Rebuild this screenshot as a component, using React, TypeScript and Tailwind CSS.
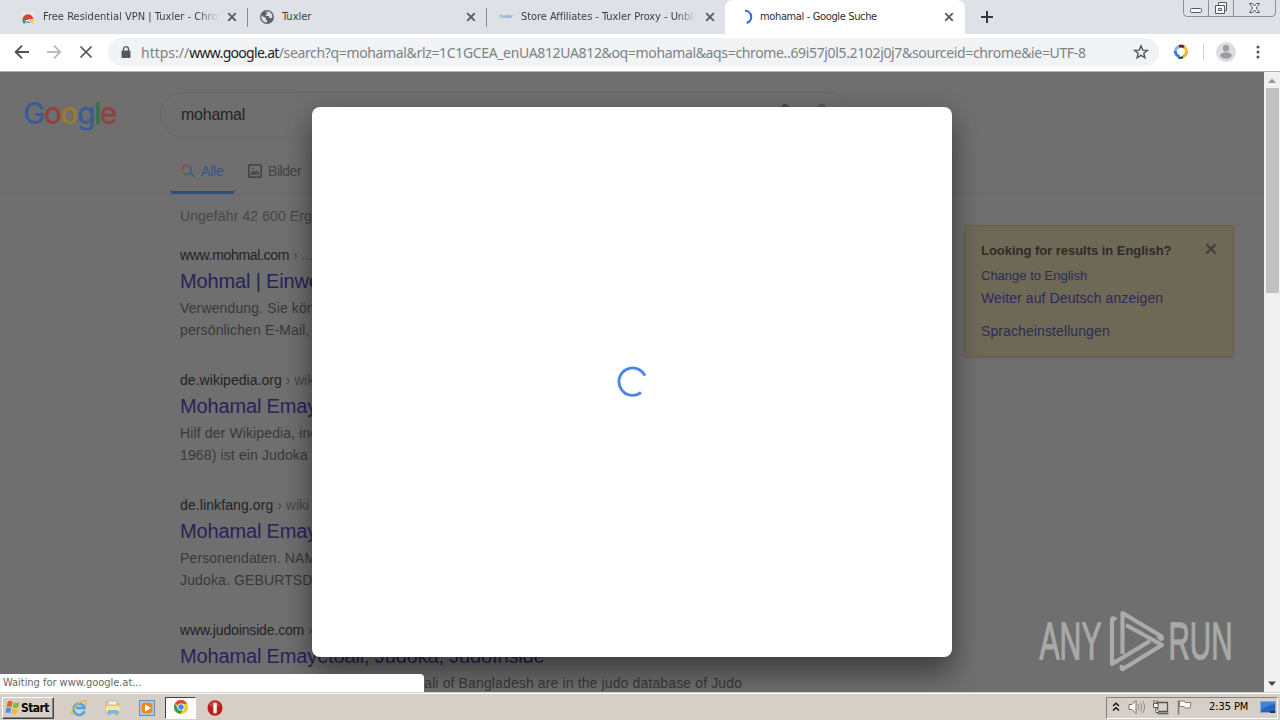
import React from "react";

const uiFont = "font-['DejaVu_Sans_Condensed','DejaVu_Sans',sans-serif] [font-stretch:condensed]";

function CloseX({ className = "" }: { className?: string }) {
  return (
    <svg width="10" height="10" viewBox="0 0 10 10" className={`shrink-0 ${className}`}>
      <path d="M1.2 1.2 8.8 8.8M8.8 1.2 1.2 8.8" stroke="#5a5d61" strokeWidth="1.9" />
    </svg>
  );
}

function StoreIcon() {
  return (
    <svg width="16" height="16" viewBox="0 0 16 16" className="shrink-0">
      <path d="M2 2h12v12.500H2z" fill="#e9eaec" />
      <path d="M5 4V2.500h6V4" stroke="#dcdcde" fill="none" />
      <path d="M2.500 11a5.500 5.500 0 0 1 11-.5L8 11z" fill="#db4437" />
      <path d="M2.500 11.500a5.500 5.500 0 0 1 .8-3l3 4L6 14.500H3z" fill="#2ba065" />
      <path d="M8 10h5.500v4.500H9z" fill="#ffcd40" />
      <path d="M5.500 14.500a2.600 2.600 0 0 1 5.200 0z" fill="#4285f4" stroke="#fff" strokeWidth=".7" />
    </svg>
  );
}

function GlobeIcon() {
  return (
    <svg width="16" height="16" viewBox="0 0 16 16" className="shrink-0">
      <circle cx="8" cy="8" r="7" fill="#5f6368" />
      <path d="M2.600 6.200 5 8.300l2 .4v2l1.200 1v1.700C5 13.800 2.300 11.200 2.300 8z" fill="#dee1e6" />
      <path d="M6.500 2.700 10.300 2.600 13 5.300 13.500 8 12 9.500 10.300 8.600 9.500 7 6.800 6.900 7 5.200 8.700 4.500z" fill="#dee1e6" />
    </svg>
  );
}

function Tab({ icon, title, className }: { icon: React.ReactNode; title: React.ReactNode; className: string }) {
  return (
    <div className={`flex h-[34px] items-center ${className}`}>
      {icon}
      {title}
      <CloseX className="ml-auto" />
    </div>
  );
}

function TabStrip() {
  return (
    <div className={`relative flex h-[34px] shrink-0 bg-[#dee1e6] text-[11px] text-[#3c4043] ${uiFont}`}>
      <Tab
        className="ml-2 w-[239px] pr-[10px] pl-3"
        icon={<StoreIcon />}
        title={<span className="ml-[7px] w-[176px] overflow-hidden pt-px tracking-[0.02px] whitespace-nowrap [mask-image:linear-gradient(90deg,#000_155px,transparent_176px)]">Free Residential VPN | Tuxler - Chrome</span>}
      />
      <div className="mt-2 h-[19px] w-px bg-[#85888c]" />
      <Tab className="w-[238px] pr-[10px] pl-[11px]" icon={<GlobeIcon />} title={<span className="ml-[7px] pt-px">Tuxler</span>} />
      <div className="mt-2 h-[19px] w-px bg-[#85888c]" />
      <Tab
        className="w-[238px] pr-[10px] pl-[11px]"
        icon={<span className="w-4 text-center text-[5px] font-bold tracking-[-0.4px] text-[#8cadd6]">tuxler</span>}
        title={<span className="ml-[7px] w-[176px] overflow-hidden pt-px tracking-[-0.05px] whitespace-nowrap [mask-image:linear-gradient(90deg,#000_155px,transparent_176px)]">Store Affiliates - Tuxler Proxy - Unblock</span>}
      />
      <Tab
        className="w-[240px] rounded-t-lg bg-white pr-[11px] pl-3 text-[#2b2d30]"
        icon={
          <svg width="16" height="16" viewBox="0 0 16 16" className="shrink-0">
            <path d="M8 1.800a6.200 6.200 0 0 1 1.600 12.200" fill="none" stroke="#2f6bdc" strokeWidth="2.100" />
          </svg>
        }
        title={<span className="ml-[7px] pt-px tracking-[-0.36px] whitespace-nowrap">mohamal - Google Suche</span>}
      />
      <svg width="12" height="12" viewBox="0 0 12 12" className="mt-[11px] ml-4">
        <path d="M6 0v12M0 6h12" stroke="#33363a" strokeWidth="2" />
      </svg>
      <svg width="93" height="17" viewBox="0 0 93 17" className="mr-[4px] ml-auto">
        <path d="M.5 0v13q0 3.500 3.500 3.500h85q3.500 0 3.500-3.500V0M25.500 0v16M50.500 0v16" fill="none" stroke="#8d9096" />
        <rect x="7.500" y="8.500" width="11" height="4" rx="1" fill="#f5f6f8" stroke="#55585e" />
        <path d="M35.500 2.500h8v8h-2v3h-9v-8h3z" fill="#f5f6f8" stroke="#55585e" />
        <path d="M35.500 5.500h6v5M35.500 8.500h3v2h-3z" fill="none" stroke="#55585e" />
        <path d="M66.500 3.500h3l2 2.500 2-2.500h3l-3.200 4.500 3.200 4.500h-3l-2-2.500-2 2.500h-3L69.700 8z" fill="#f5f6f8" stroke="#55585e" />
      </svg>
    </div>
  );
}

function Toolbar() {
  return (
    <div className="flex h-[38px] shrink-0 items-center border-b border-[#b3b3b3] bg-white pb-px">
      <svg width="96" height="16" viewBox="0 0 96 16" className="shrink-0" fill="none" strokeWidth="1.900">
        <path d="M29 8H16M22 1.700 15.700 8 22 14.300" stroke="#4e5155" />
        <path d="M47 8h13M54 1.700 60.300 8 54 14.300" stroke="#b9bbbd" />
        <path d="m80.500 2.500 11 11M91.500 2.500l-11 11" stroke="#4e5155" strokeWidth="1.700" />
      </svg>
      <div className="ml-3 flex h-7 w-[1051px] items-center rounded-full bg-[#f1f3f4] pl-[13px]">
        <svg width="10" height="12" viewBox="0 0 10 12" className="shrink-0">
          <rect x=".5" y="4.500" width="9" height="7.500" rx="1" fill="#55585c" />
          <path d="M2.500 5V3.200a2.500 2.500 0 0 1 5 0V5" fill="none" stroke="#55585c" strokeWidth="1.300" />
        </svg>
        <span className="ml-[10px] font-['Noto_Sans',sans-serif] text-[14px] whitespace-nowrap text-[#7d8186]">
          https://<span className="tracking-[-0.7px] text-[#1c1d20]">www.google.at</span>
          <span className="tracking-[-0.35px]">/search?q=mohamal&amp;rlz=1C1GCEA_enUA812UA812&amp;oq=mohamal&amp;aqs=chrome..69i57j0l5.2102j0j7&amp;sourceid=chrome&amp;ie=UTF-8</span>
        </span>
        <svg width="16" height="16" viewBox="0 0 16 16" className="mr-[10px] ml-auto shrink-0">
          <path d="m8 1.800 1.700 4.300 4.600.3-3.500 2.900 1.100 4.500L8 11.300l-3.900 2.500 1.100-4.500-3.500-2.900 4.600-.3z" fill="none" stroke="#515458" strokeWidth="1.400" />
        </svg>
      </div>
      <svg width="16" height="16" viewBox="0 0 16 16" className="ml-[14px] shrink-0" fill="none" strokeWidth="3">
        <path d="M7 2.500A6 6 0 0 0 2.200 7" stroke="#7cb8ff" />
        <path d="M2.200 7q.3 4 4.300 5.800" stroke="#3478ee" />
        <path d="M6 2.300q3-1 5.500 1" stroke="#771d28" />
        <path d="M11 3q3 2 2.500 5.500" stroke="#f7c52b" />
        <path d="M13.500 7.500q0 4-4 5" stroke="#f0b429" />
        <path d="M10 13q-2 1.400-4.500.5" stroke="#294a38" strokeWidth="2.300" />
      </svg>
      <div className="ml-[14px] h-4 w-px bg-[#cfd1d4]" />
      <svg width="20" height="20" viewBox="0 0 20 20" className="ml-3 shrink-0">
        <circle cx="10" cy="10" r="10" fill="#dddddf" />
        <circle cx="10" cy="6.200" r="3.200" fill="#9b9da0" />
        <ellipse cx="10" cy="13.500" rx="5.700" ry="3.200" fill="#9b9da0" />
      </svg>
      <svg width="4" height="14" viewBox="0 0 4 14" className="ml-[20px]" fill="#4f5256">
        <circle cx="2" cy="2" r="1.500" /><circle cx="2" cy="7" r="1.500" /><circle cx="2" cy="12" r="1.500" />
      </svg>
    </div>
  );
}

function GoogleLogo() {
  return (
    <div className="mt-[-5px] ml-[23px] w-[94px] font-['Inter',sans-serif] text-[30px] leading-[40px] font-medium tracking-[-1.6px] whitespace-nowrap">
      <span className="text-[#3c5c93]">G</span>
      <span className="text-[#91423d]">o</span>
      <span className="text-[#987c33]">o</span>
      <span className="text-[#3c5c93]">g</span>
      <span className="text-[#34704a]">l</span>
      <span className="text-[#91423d]">e</span>
    </div>
  );
}

type Result = { site: string; path: string; title: string; lines: string[]; siteClass: string };

const results: Result[] = [
  { site: "www.mohmal.com", siteClass: "tracking-[-0.32px]", path: " › ...", title: "Mohmal | Einweg", lines: ["Verwendung. Sie können", "persönlichen E-Mail, die"] },
  { site: "de.wikipedia.org", siteClass: "tracking-[0.04px]", path: " › wiki", title: "Mohamal Emayetoali", lines: ["Hilf der Wikipedia, indem", "1968) ist ein Judoka aus"] },
  { site: "de.linkfang.org", siteClass: "tracking-[0.1px]", path: " › wiki", title: "Mohamal Emayetoali", lines: ["Personendaten. NAME", "Judoka. GEBURTSDATUM"] },
  { site: "www.judoinside.com", siteClass: "tracking-[-0.15px]", path: " › judoka", title: "Mohamal Emayetoali, Judoka, JudoInside", lines: ["The Judo results of Mohamal Emayetoali of Bangladesh are in the judo database of Judo"] },
];

function ResultItem({ site, siteClass, path, title, lines }: Result) {
  return (
    <article className="h-[125px] whitespace-nowrap text-[#393939]">
      <div className="text-[14px] leading-[18px] text-[#222324]">
        <span className={siteClass}>{site}</span>
        <span className="text-[#454748]">{path}</span>
      </div>
      <h3 className="mt-1 text-[20px] leading-[26px] tracking-[-0.15px] text-[#2a2259]">{title}</h3>
      <div className="mt-[3px] text-[14px] leading-[22px] tracking-[0.13px]">
        {lines.map((l) => <p key={l}>{l}</p>)}
      </div>
    </article>
  );
}

function SearchPage() {
  return (
    <main className="h-full overflow-hidden bg-[#6f6f6f] font-['Liberation_Sans',sans-serif]">
      <header className="h-[123px] border-b border-[#696969] pt-[20px]">
        <div className="flex h-[46px] items-center">
          <GoogleLogo />
          <div className="ml-[43px] flex h-[46px] w-[690px] items-center rounded-full border border-[#676767] pl-5 text-[16px] tracking-[-0.25px] text-[#242424]">
            mohamal
            <span className="mt-[-14px] ml-[536px] h-2 w-2 self-center rounded-full bg-[#484b50]" />
            <span className="mt-[-14px] ml-[29px] h-2 w-2 self-center rounded-full bg-[#54565a]" />
          </div>
        </div>
        <nav className="mt-[13px] flex h-[43px] pl-[170px] text-[14px] leading-[42px] tracking-[-0.2px] text-[#424345]">
          <div className="flex w-[65px] items-center rounded-b-sm border-b-3 border-[#2d4b80] pl-[10px] text-[#31558c]">
            <svg width="16" height="16" viewBox="0 0 16 16" fill="none" strokeWidth="1.700">
              <path d="M2 8a4.500 4.500 0 0 1 7.500-4.200" stroke="#86503e" />
              <path d="M9.200 3.600a4.500 4.500 0 0 1 .8 6L14.500 14" stroke="#3d5d90" />
              <path d="M2 7a4.500 4.500 0 0 0 2 3.500" stroke="#8b702d" />
              <path d="M3.700 10.300a4.500 4.500 0 0 0 6-.4" stroke="#486b52" />
            </svg>
            <span className="ml-[5px]">Alle</span>
          </div>
          <div className="flex items-center border-b-3 border-transparent pl-3 tracking-[-0.45px]">
            <svg width="16" height="16" viewBox="0 0 16 16" fill="none" stroke="#404143" strokeWidth="1.500">
              <rect x="1.750" y="1.750" width="12.500" height="12.500" rx="1.800" />
              <path d="m4 11 2-2.500 1.500 1.500L9.500 8l2.500 3zM5 5.500h1.500" strokeWidth="1.200" />
            </svg>
            <span className="ml-[5px]">Bilder</span>
          </div>
        </nav>
      </header>
      <div className="flex pl-[180px]">
        <section className="w-[784px] shrink-0">
          <p className="mt-3 mb-[21px] text-[14px] leading-[18px] tracking-[0.1px] text-[#464748]">Ungefähr 42 600 Ergebnisse</p>
          {results.map((r, i) => <ResultItem key={i} {...r} />)}
        </section>
        <aside className="mt-[30px] flex h-[132px] w-[270px] justify-between rounded-xs border border-[#6c6148] bg-[#6e6857] px-4 pt-[15px] text-[14px] text-[#2d2a5a] shadow-[0_1px_2px_rgba(0,0,0,0.15)]">
          <div className="whitespace-nowrap">
            <p className="text-[13px] leading-[20px] font-bold tracking-[-0.03px] text-[#2d2c26]">Looking for results in English?</p>
            <p className="mt-[5px] text-[13px] leading-[20px]">Change to English</p>
            <p className="mt-[2px] leading-[20px] tracking-[0.1px]">Weiter auf Deutsch anzeigen</p>
            <p className="mt-[13px] leading-[20px] tracking-[0.1px]">Spracheinstellungen</p>
          </div>
          <svg width="12" height="12" viewBox="0 0 12 12" className="mt-[2px]">
            <path d="m1.500 1.500 9 9M10.500 1.500l-9 9" stroke="#403f39" strokeWidth="2.300" />
          </svg>
        </aside>
      </div>
    </main>
  );
}

function Scrollbar() {
  return (
    <div className="flex w-4 shrink-0 flex-col items-center bg-[#f1f1f1]">
      <svg width="16" height="16" viewBox="0 0 16 16"><path d="M4 11h8L8 6.500z" fill="#969696" /></svg>
      <div className="h-[205px] w-[13px] bg-[#c1c1c1]" />
      <svg width="16" height="16" viewBox="0 0 16 16" className="mt-auto"><path d="M4 5.500h8L8 10z" fill="#484848" /></svg>
    </div>
  );
}

function Watermark() {
  return (
    <svg width="220" height="74" viewBox="1030 603 220 74" className="absolute top-[531px] left-[1030px]" fill="#a9a9a9">
      <g fontFamily="'Liberation Sans Narrow','Liberation Sans',sans-serif" fontSize="52" stroke="#a9a9a9" strokeWidth="1.300">
        <text x="1039.500" y="659" textLength="62" lengthAdjust="spacingAndGlyphs">ANY</text>
        <text x="1168.500" y="659" textLength="64" lengthAdjust="spacingAndGlyphs">RUN</text>
      </g>
      <g fill="none" stroke="#ababab" strokeWidth="4.200" strokeLinejoin="round">
        <path d="M1116 620q-4-4-4 1v43l38-23" />
        <path d="M1122.500 654v-41l38.500 23q3 6-3 0" />
        <path d="M1126 625l36 20-39 24q-2 1-1-4" />
      </g>
    </svg>
  );
}

function Taskbar() {
  return (
    <footer className={`flex h-7 shrink-0 items-center border-t border-[#d4d0c8] bg-[#d6cfc7] text-[11px] text-black shadow-[inset_0_1px_0_#fff] ${uiFont}`}>
      <div className="mt-[2px] ml-[2px] flex h-[22px] w-[52px] items-center border border-t-white border-r-[#444] border-b-[#444] border-l-white pl-px shadow-[inset_-1px_-1px_0_#87837b]">
        <svg width="17" height="17" viewBox="0 0 16 16" className="shrink-0">
          <path d="M3.500 2.500q2-1.500 4.500 0L7 7.500q-2-1-4.500 0z" fill="#e2602a" />
          <path d="M9 3q2 1.300 5.500 0l-1.200 5q-2.500 1-5.200-.3z" fill="#86b83c" />
          <path d="M2.300 8.500q2.500-1 4.500 0l-1 4.800q-2-1.300-4.600-.1z" fill="#4a8fd9" />
          <path d="M7.800 9q2.500 1 5.200.1L12 13.800q-3 1-5.300-.2z" fill="#f1b92e" />
        </svg>
        <b className="text-[12px] tracking-[-0.6px]">Start</b>
      </div>
      <div className="mt-[2px] ml-[16px] flex items-center">
        <svg width="18" height="18" viewBox="0 0 18 18">
          <path d="M14.500 12A5.600 5.600 0 1 1 14.600 9H6" fill="none" stroke="#4aa6e2" strokeWidth="2.600" />
          <path d="M2.500 16Q0 13 6.500 6.500T16 2.500q1 1.500-1 4" fill="none" stroke="#e6b535" strokeWidth="1.200" />
        </svg>
        <svg width="18" height="18" viewBox="0 0 18 18" className="ml-4">
          <path d="M2 3h6l1 2h6v9H2z" fill="#f3db80" stroke="#cda74a" strokeWidth=".7" />
          <path d="M4 1.800h9V6H4z" fill="#e8f0e2" stroke="#8cb486" strokeWidth=".6" />
          <path d="M2 7.500h14V12H2z" fill="#f8e79f" />
          <path d="M4 16v-5h10v5h-3v-2H7v2z" fill="#7db9dd" />
        </svg>
        <svg width="16" height="16" viewBox="0 0 16 16" className="ml-[17px]">
          <rect x=".5" y=".5" width="15" height="15" fill="#a7cbed" stroke="#638dbb" />
          <rect x="2.500" y="2.500" width="11" height="11" rx="4" fill="#f08a1b" />
          <path d="M6 4.300 11.700 8 6 11.700z" fill="#fff" />
        </svg>
      </div>
      <div className="mt-[2px] ml-[10px] flex h-[22px] w-[31px] items-center justify-center border border-t-[#45423d] border-r-white border-b-white border-l-[#45423d] bg-[#fcfbfa]">
        <svg width="16" height="16" viewBox="0 0 16 16" className="mt-[-2px]">
          <circle cx="8" cy="8" r="7" fill="#f6c829" />
          <path d="M8 8 1.900 4.500A7 7 0 0 1 14.100 4.800H8z" fill="#db4637" />
          <path d="M1.900 4.600A7 7 0 0 0 7.400 15l3-5.500L8 8 4.900 9.800z" fill="#359b55" />
          <circle cx="8" cy="8" r="3.500" fill="#fff" />
          <circle cx="8" cy="8" r="2.700" fill="#4285f4" />
        </svg>
      </div>
      <svg width="16" height="16" viewBox="0 0 16 16" className="mt-[2px] ml-[11px]">
        <ellipse cx="8" cy="8" rx="7.500" ry="7.700" fill="#bd1d1d" />
        <ellipse cx="7.500" cy="4.500" rx="5" ry="3" fill="#d95c57" opacity=".55" />
        <rect x="6.300" y="2.500" width="3.500" height="11" rx="1.500" fill="#f3efea" />
      </svg>
      <div className="mt-[2px] mr-[2px] ml-auto flex h-[22px] w-[172px] items-center border border-t-[#85817a] border-r-white border-b-white border-l-[#85817a] pb-[2px]">
        <svg width="8" height="10" viewBox="0 0 8 10" className="ml-[5px]">
          <path d="M1 4 4 1.300 7 4M1 8.500 4 5.800l3 2.700" fill="none" stroke="#111" strokeWidth="1.500" />
        </svg>
        <svg width="18" height="16" viewBox="0 0 18 16" className="ml-2">
          <path d="M1 5.500h3l4-4v13l-4-4H1z" fill="#fafafa" stroke="#77736c" />
          <path d="M10 5q2 3 0 6M12.300 3.500q3 4.500 0 9M14.600 2q4 6 0 12" fill="none" stroke="#918d86" />
        </svg>
        <svg width="18" height="16" viewBox="0 0 18 16" className="ml-[6px]">
          <path d="M5.500 3.500h10v9h-10z" fill="#d6d3cc" stroke="#595650" strokeWidth="1.300" />
          <path d="M5.500 14.500h11" stroke="#696660" strokeWidth="1.700" />
          <path d="M2 1v3M5 1v3M1.500 4.500h4.500v4h-4.500zM3.800 8.500v5h3" fill="#fff" stroke="#5e5b55" />
        </svg>
        <svg width="18" height="16" viewBox="0 0 18 16" className="ml-[6px]">
          <path d="M2.500 1.500v14" stroke="#79756e" strokeWidth="1.500" />
          <path d="M3.500 2h5l1 1.500h5.500L14 9H9L8 7.500H3.500z" fill="#fff" stroke="#827e77" />
        </svg>
        <span className="ml-[15px] pt-[2px] text-[11px] tracking-[-0.08px] whitespace-nowrap">2:35 PM</span>
        <svg width="16" height="16" viewBox="0 0 16 16" className="mr-px ml-auto shrink-0">
          <rect x=".5" y="2.500" width="15" height="11" fill="#2863b8" stroke="#8ba8ca" />
          <path d="M1 3h14v2q-7 1-14 6z" fill="#3f83d8" />
          <path d="M10 12h5v2h-5z" fill="#16345f" />
        </svg>
      </div>
    </footer>
  );
}

export default function App() {
  return (
    <div className="flex h-[720px] w-[1280px] flex-col overflow-hidden bg-white">
      <TabStrip />
      <Toolbar />
      <div className="relative flex h-[620px] shrink-0">
        <div className="relative w-[1264px] overflow-hidden">
          <SearchPage />
          <div className="absolute inset-0 flex items-center justify-center">
            <div className="flex h-[550px] w-[640px] items-center justify-center rounded-lg bg-white shadow-[0_5px_26px_rgba(0,0,0,0.22),0_20px_28px_rgba(0,0,0,0.3)]">
              <svg width="32" height="32" viewBox="0 0 32 32">
                <path d="M29 9.700A13.700 13.700 0 1 0 25 26.500" fill="none" stroke="#4a86e4" strokeWidth="2.900" />
              </svg>
            </div>
          </div>
        </div>
        <Scrollbar />
        <Watermark />
        <div className={`absolute bottom-0 left-0 flex h-[18px] w-[424px] items-center rounded-tr bg-white pt-px pl-[3px] text-[11px] tracking-[-0.03px] text-[#65686c] ${uiFont}`}>
          Waiting for www.google.at...
        </div>
      </div>
      <Taskbar />
    </div>
  );
}
